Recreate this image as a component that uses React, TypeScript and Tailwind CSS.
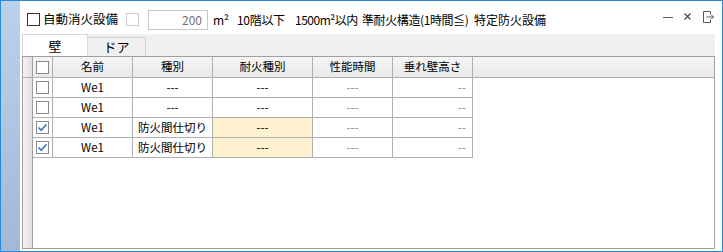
import { Fragment } from 'react';

type Row = { checked: boolean; name: string; kind: string; fire: string; highlight: boolean };

const rows: Row[] = [
    { checked: false, name: 'We1', kind: '---', fire: '---', highlight: false },
    { checked: false, name: 'We1', kind: '---', fire: '---', highlight: false },
    { checked: true, name: 'We1', kind: '防火間仕切り', fire: '---', highlight: true },
    { checked: true, name: 'We1', kind: '防火間仕切り', fire: '---', highlight: true },
];

const font = { fontFamily: '"Noto Sans CJK JP", "Noto Sans", sans-serif' };

function Box({ checked, dark }: { checked?: boolean; dark?: boolean }) {
    return (
        <div className={`w-[13px] h-[13px] border bg-white flex items-center justify-center ${dark ? 'border-[#333333]' : 'border-[#8a8a8a]'}`}>
            {checked && (
                <svg width="11" height="11" viewBox="0 0 11 11">
                    <path d="M1.5 5.5 L4.2 8.2 L9.5 2.2" fill="none" stroke="#3b7bcb" strokeWidth="1.7" />
                </svg>
            )}
        </div>
    );
}

function RowHead() {
    return <div className="w-[10px] shrink-0 border-r border-[#a0a0a0] bg-gradient-to-r from-[#f4f4f4] to-[#dedede]" />;
}

export default function App() {
    return (
        <div className="w-[723px] h-[252px] border border-[#2b88d8] flex bg-white text-black" style={font}>
            <div className="w-[19px] shrink-0 bg-gradient-to-b from-[#bbd1eb] to-[#a3b8d5]" />
            <div className="flex-1 flex flex-col">
                {/* top options */}
                <div className="h-[33px] pt-[4px] flex items-center text-[12px] whitespace-nowrap">
                    <div className="ml-[7px] shrink-0"><Box dark /></div>
                    <span className="ml-[3px] w-[83px] shrink-0 text-[12.5px]">自動消火設備</span>
                    <div className="w-[13px] h-[13px] shrink-0 border border-[#cccccc]" />
                    <div className="ml-[9px] w-[60px] h-[20px] shrink-0 border border-[#c8c8c8] flex items-center justify-end pr-[5px] text-[#707070]">200</div>
                    <span className="ml-[5px] w-[24px] shrink-0">m²</span>
                    <span className="w-[58px] shrink-0 tracking-[-0.3px]">10階以下</span>
                    <span className="w-[67px] shrink-0 tracking-[-0.5px]">1500m²以内</span>
                    <span className="w-[112px] shrink-0 tracking-[-0.4px]">準耐火構造(1時間≦)</span>
                    <span className="shrink-0">特定防火設備</span>
                    <div className="ml-auto mr-[8px] -mt-[6px] flex items-center shrink-0">
                        <svg width="10" height="10" viewBox="0 0 10 10">
                            <path d="M0 5.5 H10" stroke="#5a5a5a" strokeWidth="1" />
                        </svg>
                        <svg className="ml-[11px]" width="7" height="7" viewBox="0 0 7 7">
                            <path d="M0.5 0.5 L6.5 6.5 M6.5 0.5 L0.5 6.5" stroke="#4a4a4a" strokeWidth="1.3" />
                        </svg>
                        <svg className="ml-[12px]" width="11" height="12" viewBox="0 0 11 12">
                            <path d="M7.5 3.5 V0.5 H0.5 V11.5 H7.5 V8.5" fill="none" stroke="#5a5a5a" strokeWidth="1" />
                            <path d="M3.5 6 H10.5 M8.5 4 L10.5 6 L8.5 8" fill="none" stroke="#5a5a5a" strokeWidth="1" />
                        </svg>
                    </div>
                </div>

                {/* tabs */}
                <div className="h-[22px] ml-[2px] mr-[7px] flex bg-[#f0f0f0] text-[13px]">
                    <div className="w-[66px] bg-white border-t border-l border-r border-[#d9d9d9] flex items-center justify-center">壁</div>
                    <div className="w-[58px] mt-[3px] border-t border-r border-[#d3d3d3] flex items-center justify-center">ドア</div>
                </div>

                {/* grid */}
                <div className="flex-1 ml-[2px] mr-[7px] mb-[2px] border border-[#a0a0a0] flex flex-col text-[11.5px]">
                    <div className="h-[21px] flex border-b border-[#b0b0b0] bg-gradient-to-b from-[#f6f6f6] to-[#e9e9e9]">
                        <RowHead />
                        <div className="w-[20px] border-r border-[#b0b0b0] flex items-center justify-center"><Box /></div>
                        <div className="w-[80px] border-r border-[#b0b0b0] flex items-center justify-center">名前</div>
                        <div className="w-[80px] border-r border-[#b0b0b0] flex items-center justify-center">種別</div>
                        <div className="w-[100px] border-r border-[#b0b0b0] flex items-center justify-center">耐火種別</div>
                        <div className="w-[80px] border-r border-[#b0b0b0] flex items-center justify-center">性能時間</div>
                        <div className="w-[80px] border-r border-[#b0b0b0] flex items-center justify-center">垂れ壁高さ</div>
                        <div className="flex-1" />
                    </div>
                    {rows.map((r, i) => (
                        <Fragment key={i}>
                            <div className="h-[20px] flex">
                                <RowHead />
                                <div className="w-[20px] border-r border-b border-[#b0b0b0] flex items-center justify-center"><Box checked={r.checked} /></div>
                                <div className="w-[80px] border-r border-b border-[#b0b0b0] flex items-center justify-center">{r.name}</div>
                                <div className="w-[80px] border-r border-b border-[#b0b0b0] flex items-center justify-center">{r.kind}</div>
                                <div className={`w-[100px] border-r border-b border-[#b0b0b0] flex items-center justify-center ${r.highlight ? 'bg-[#fff1d0]' : ''}`}>{r.fire}</div>
                                <div className="w-[80px] border-r border-b border-[#b0b0b0] flex items-center justify-center text-[#8a8a8a]">---</div>
                                <div className="w-[80px] border-r border-b border-[#b0b0b0] flex items-center justify-end pr-[6px] text-[#8a8a8a]">--</div>
                            </div>
                        </Fragment>
                    ))}
                    <div className="flex-1 flex">
                        <RowHead />
                    </div>
                </div>
            </div>
        </div>
    );
}
